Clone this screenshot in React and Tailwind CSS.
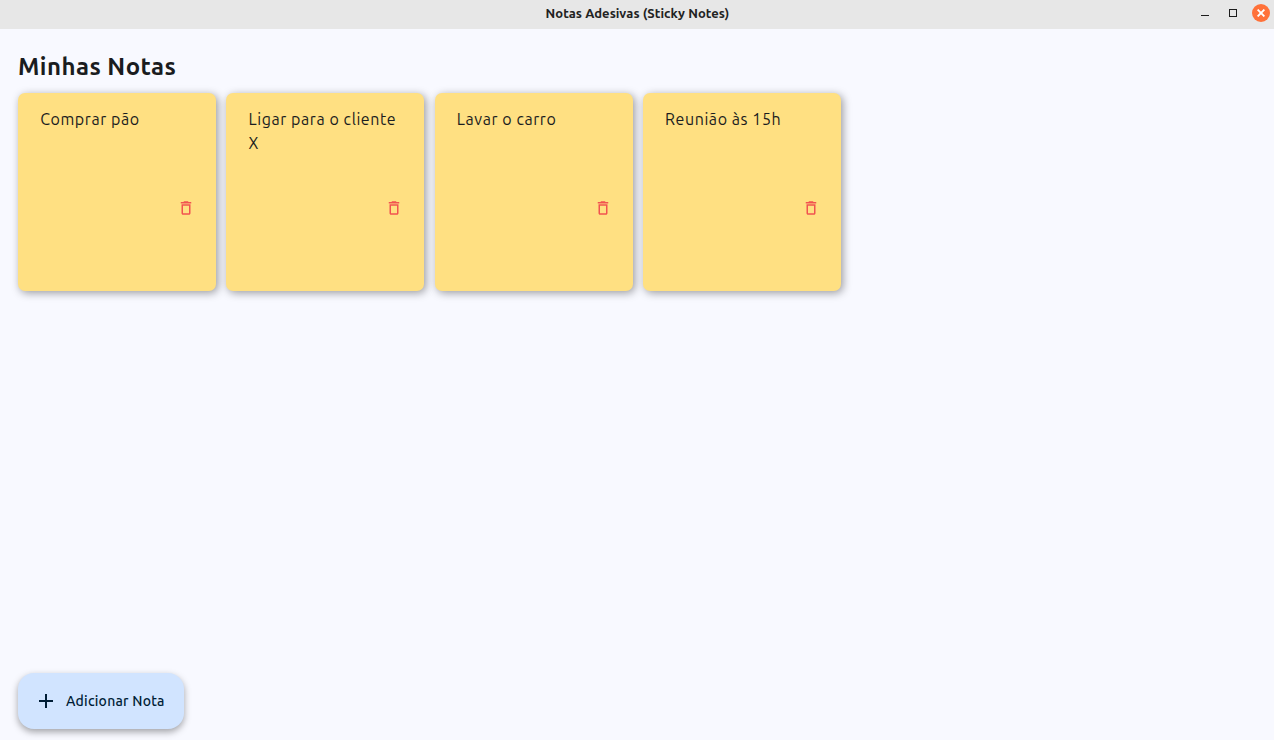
import { MdAdd, MdDeleteOutline } from "react-icons/md";

const notes = ["Comprar pão", "Ligar para o cliente X", "Lavar o carro", "Reunião às 15h"];

function TitleBar() {
  return (
    <header className="grid h-[29px] shrink-0 grid-cols-[1fr_auto_1fr] items-start bg-[#e7e7e7] px-1 pt-1">
      <span />
      <h1 className="whitespace-nowrap pl-px text-[13px] font-semibold leading-[18px] text-[#222] tracking-[0.06px]">
        Notas Adesivas (Sticky Notes)
      </h1>
      <div className="flex items-center justify-end">
        <button aria-label="Minimizar" className="mr-5 mt-[5px] h-px w-2 bg-[#1c1c1c]" />
        <button aria-label="Maximizar" className="mr-[15px] size-2 border border-[#1c1c1c]" />
        <button aria-label="Fechar" className="flex size-[18px] items-center justify-center rounded-full bg-[#ff7139]">
          <svg viewBox="0 0 8 8" className="size-2 text-white" fill="none" stroke="currentColor" strokeWidth="1.9">
            <path d="M.6.6l6.8 6.8M7.4.6L.6 7.4" />
          </svg>
        </button>
      </div>
    </header>
  );
}

function Note({ text }) {
  return (
    <article className="flex h-[198px] w-[198px] flex-col rounded-[7px] bg-[#ffe082] pl-[22.2px] pr-[22px] pt-[14px] shadow-[2px_2px_8px_rgba(0,0,0,0.38)]">
      <p className="h-[92px] text-[16px] leading-6 text-[#1a1c20] tracking-[0.57px]">{text}</p>
      <button aria-label="Excluir" className="-mr-[1px] self-end text-[#f15350]">
        <MdDeleteOutline size={18} />
      </button>
    </article>
  );
}

export default function App() {
  return (
    <div className="flex h-screen flex-col bg-[#f8f9ff] font-['Ubuntu','Noto_Sans',sans-serif]">
      <TitleBar />
      <main className="flex flex-1 flex-col items-start pb-[11px] pl-[18px] pt-[22px]">
        <h2 className="h-[42px] whitespace-nowrap text-[24px] font-bold leading-8 text-[#1a1c20] tracking-[0.45px]">Minhas Notas</h2>
        <section className="flex gap-[10.3px]">
          {notes.map((text) => (
            <Note key={text} text={text} />
          ))}
        </section>
        <button className="mt-auto flex h-14 w-[166.4px] items-center rounded-2xl bg-[#d1e4ff] pl-4 text-[#001d36] shadow-[0_3px_7px_rgba(0,0,0,0.35)]">
          <MdAdd size={24} />
          <span className="ml-2 whitespace-nowrap text-[14px] font-medium leading-5 tracking-[0.22px]">Adicionar Nota</span>
        </button>
      </main>
    </div>
  );
}
